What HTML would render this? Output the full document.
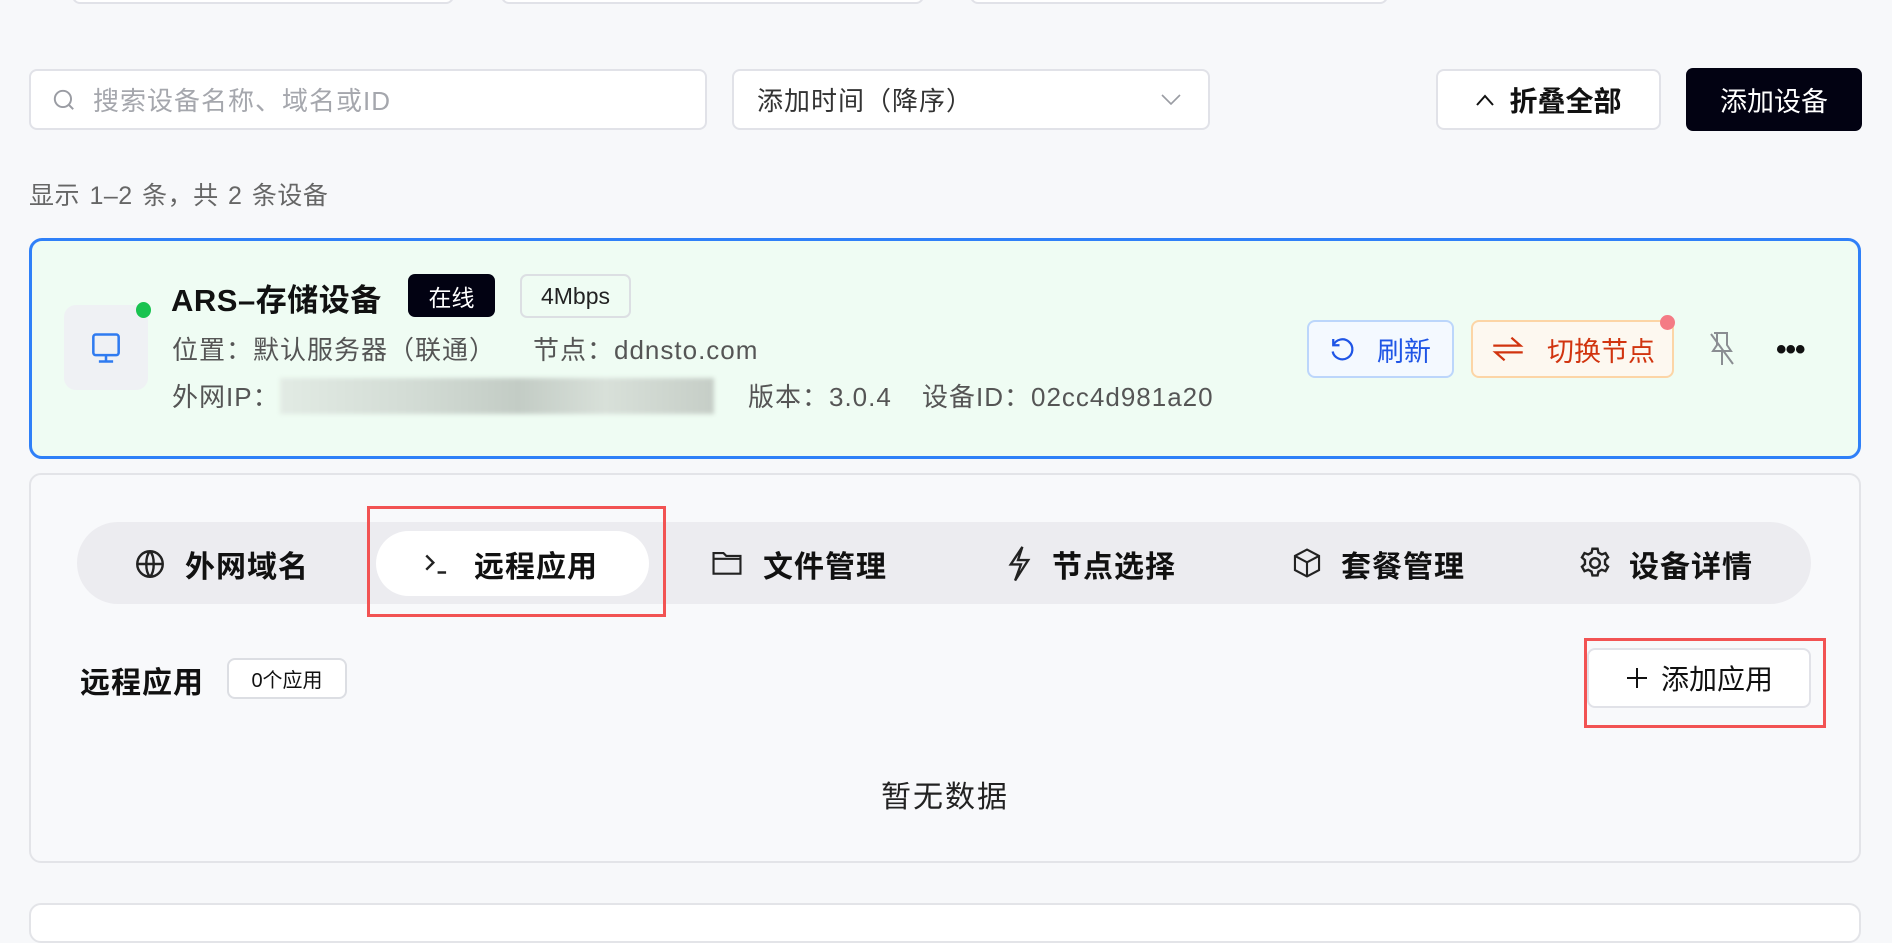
<!DOCTYPE html>
<html><head><meta charset="utf-8"><style>
*{box-sizing:border-box;margin:0;padding:0}
body{width:1892px;height:918px;background:#f7f8fa;font-family:"Liberation Sans","Noto Sans CJK SC",sans-serif;position:relative;overflow:hidden;color:#111}
.abs{position:absolute}
.box{position:absolute;background:#fff;border:2px solid #e1e2e8;border-radius:8px}
.fl{display:flex;align-items:center}
.ls{letter-spacing:1px}
</style></head><body>
<div class="box" style="left:72px;top:-20px;width:382px;height:24px"></div>
<div class="box" style="left:501px;top:-20px;width:423px;height:24px"></div>
<div class="box" style="left:970px;top:-20px;width:418px;height:24px"></div>

<div class="box fl" style="left:29px;top:69px;width:678px;height:61px;padding-left:20px;color:#a5a7ad;font-size:26px;letter-spacing:1px">
<svg width="26" height="26" viewBox="0 0 24 24" fill="none" stroke="#9a9ca3" stroke-width="1.8"><circle cx="11" cy="11" r="7.5"/><path d="M16.5 16.5l4 4"/></svg>
<span style="margin-left:16px">搜索设备名称、域名或ID</span></div>
<div class="box fl" style="left:732px;top:69px;width:478px;height:61px;padding-left:23px;font-size:26px;color:#333;letter-spacing:1px">添加时间（降序）
<svg class="abs" style="right:26px;top:22px" width="22" height="14" viewBox="0 0 22 14" fill="none" stroke="#9a9ca3" stroke-width="1.6"><path d="M2 2l9 9 9-9"/></svg></div>
<div class="box fl" style="left:1436px;top:69px;width:225px;height:61px;justify-content:center;font-size:28px;font-weight:bold">
<svg width="20" height="14" viewBox="0 0 20 14" fill="none" stroke="#111" stroke-width="2"><path d="M2 12l8-9 8 9"/></svg><span style="margin-left:14px">折叠全部</span></div>
<div class="abs fl" style="left:1686px;top:68px;width:176px;height:63px;background:#020212;border-radius:7px;color:#fff;font-size:27px;justify-content:center">添加设备</div>

<div class="abs" style="left:29px;top:176px;font-size:25px;color:#666;letter-spacing:0.5px;word-spacing:2px">显示 1–2 条，共 2 条设备</div>

<div class="abs" style="left:29px;top:238px;width:1832px;height:221px;background:#effcf3;border:3px solid #2f80f8;border-radius:13px"></div>
<div class="abs fl" style="left:64px;top:305px;width:84px;height:85px;background:#eff1f4;border-radius:12px;justify-content:center">
<svg width="38" height="38" viewBox="0 0 24 24" fill="none" stroke="#2f7bf0" stroke-width="1.6"><rect x="4" y="3.5" width="16" height="13" rx="1.5"/><path d="M12 16.5v4M7.5 20.5h9"/></svg></div>
<div class="abs" style="left:136px;top:302px;width:15px;height:16px;border-radius:50%;background:#19c350"></div>
<div class="abs" style="left:171px;top:275px;font-size:31px;font-weight:bold;letter-spacing:0.5px">ARS–存储设备</div>
<div class="abs fl" style="left:408px;top:274px;width:87px;height:43px;background:#020212;border-radius:7px;color:#fff;font-size:23px;justify-content:center">在线</div>
<div class="abs fl" style="left:520px;top:274px;width:111px;height:44px;border:2px solid #dcdfe3;border-radius:7px;font-size:23px;justify-content:center;color:#222">4Mbps</div>
<div class="abs ls" style="left:172px;top:330px;font-size:26px;color:#555">位置：默认服务器（联通）</div>
<div class="abs ls" style="left:533px;top:330px;font-size:26px;color:#555">节点：ddnsto.com</div>
<div class="abs ls" style="left:172px;top:377px;font-size:26px;color:#555">外网IP：</div>
<div class="abs" style="left:280px;top:378px;width:434px;height:36px;background:linear-gradient(90deg,#e2ebe4,#d3dcd5 30%,#c3ccc5 55%,#d8e0d9 75%,#c6cec7);filter:blur(2px)"></div>
<div class="abs ls" style="left:748px;top:377px;font-size:26px;color:#555">版本：3.0.4</div>
<div class="abs ls" style="left:922px;top:377px;font-size:26px;color:#555">设备ID：02cc4d981a20</div>

<div class="abs fl" style="left:1307px;top:320px;width:147px;height:58px;border:2px solid #bcd6fb;border-radius:8px;background:#f4f9ff;color:#1f55e6;font-size:27px;padding-left:18px">
<svg width="30" height="30" viewBox="0 0 24 24" fill="none" stroke="#1f55e6" stroke-width="1.8"><path d="M5 9a8 8 0 1 1 -0.5 5"/><path d="M5 4v5h5"/></svg><span style="margin-left:20px">刷新</span></div>
<div class="abs fl" style="left:1471px;top:320px;width:203px;height:58px;border:2px solid #fcd5a6;border-radius:8px;background:#fdf8f0;color:#d1340f;font-size:27px;padding-left:18px">
<svg width="34" height="30" viewBox="0 0 30 26" fill="none" stroke="#d1340f" stroke-width="2"><path d="M2 10h24l-8-7M28 16H4l8 7"/></svg><span style="margin-left:22px">切换节点</span></div>
<div class="abs" style="left:1660px;top:315px;width:15px;height:15px;border-radius:50%;background:#f47b85"></div>
<svg class="abs" style="left:1707px;top:330px" width="30" height="38" viewBox="0 0 30 38" fill="none" stroke="#8a8d92" stroke-width="2"><path d="M7 3h14M10 3v12l-4 6h18l-4-6V3M15 21v14M4 4l22 30"/></svg>
<div class="abs" style="left:1776px;top:340px;font-size:30px;font-weight:bold;letter-spacing:-1px;line-height:20px">•••</div>

<div class="abs" style="left:29px;top:473px;width:1832px;height:390px;background:#f8f9fb;border:2px solid #e3e4e8;border-radius:12px"></div>
<div class="abs" style="left:77px;top:522px;width:1734px;height:82px;background:#ececf0;border-radius:41px"></div>
<div class="abs" style="left:376px;top:531px;width:273px;height:65px;background:#fff;border-radius:33px"></div>
<div class="abs" style="left:367px;top:506px;width:299px;height:111px;border:3px solid #f25353"></div>
<div style="font-size:30px;font-weight:bold;letter-spacing:1px">
<svg class="abs" style="left:133px;top:547px" width="34" height="34" viewBox="0 0 24 24" fill="none" stroke="#222" stroke-width="1.7"><circle cx="12" cy="12" r="9"/><path d="M3 12h18M12 3c-3.5 3.5-3.5 14.5 0 18M12 3c3.5 3.5 3.5 14.5 0 18"/></svg>
<div class="abs" style="left:185px;top:542px">外网域名</div>
<svg class="abs" style="left:422px;top:547px" width="34" height="34" viewBox="0 0 24 24" fill="none" stroke="#222" stroke-width="1.7"><path d="M3 6l5 5-5 5M11 18h6"/></svg>
<div class="abs" style="left:474px;top:542px">远程应用</div>
<svg class="abs" style="left:709px;top:546px" width="36" height="34" viewBox="0 0 24 24" fill="none" stroke="#222" stroke-width="1.5"><path d="M2.5 5h7l2 2h10v12.5h-19z M2.5 9h19"/></svg>
<div class="abs" style="left:763px;top:542px">文件管理</div>
<svg class="abs" style="left:1003px;top:544px" width="30" height="38" viewBox="0 0 20 26" fill="none" stroke="#222" stroke-width="1.6"><path d="M13 2L5 14h7l-4 11 9-14h-7z"/></svg>
<div class="abs" style="left:1052px;top:542px">节点选择</div>
<svg class="abs" style="left:1290px;top:546px" width="34" height="34" viewBox="0 0 24 24" fill="none" stroke="#222" stroke-width="1.5"><path d="M12 2.5l8.5 4.5v10L12 21.5 3.5 17V7z M3.5 7L12 11.5 20.5 7 M12 11.5v10"/></svg>
<div class="abs" style="left:1341px;top:542px">套餐管理</div>
<svg class="abs" style="left:1577px;top:545px" width="36" height="36" viewBox="0 0 24 24" fill="none" stroke="#222" stroke-width="1.6"><circle cx="12" cy="12" r="3.2"/><path d="M10.3 2.5h3.4l.6 2.6 2.2 1.2 2.5-.9 1.7 2.9-2 1.8v2.6l2 1.8-1.7 2.9-2.5-.9-2.2 1.2-.6 2.6h-3.4l-.6-2.6-2.2-1.2-2.5.9-1.7-2.9 2-1.8v-2.6l-2-1.8 1.7-2.9 2.5.9 2.2-1.2z"/></svg>
<div class="abs" style="left:1629px;top:542px">设备详情</div>
</div>

<div class="abs" style="left:80px;top:658px;font-size:30px;font-weight:bold;letter-spacing:1px">远程应用</div>
<div class="abs fl" style="left:227px;top:658px;width:120px;height:41px;border:2px solid #dcdee3;border-radius:8px;background:#fff;font-size:20px;justify-content:center">0个应用</div>
<div class="abs fl" style="left:1587px;top:648px;width:224px;height:60px;background:#fff;border:2px solid #e1e2e8;border-radius:8px;font-size:28px;justify-content:center">
<svg width="24" height="24" viewBox="0 0 24 24" stroke="#111" stroke-width="2"><path d="M12 2v20M2 12h20"/></svg><span style="margin-left:12px">添加应用</span></div>
<div class="abs" style="left:1584px;top:638px;width:242px;height:90px;border:3px solid #f25353"></div>
<div class="abs" style="left:881px;top:772px;font-size:30px;color:#222;letter-spacing:2px">暂无数据</div>

<div class="abs" style="left:29px;top:903px;width:1832px;height:40px;background:#fff;border:2px solid #e3e4e8;border-radius:12px"></div>
</body></html>
